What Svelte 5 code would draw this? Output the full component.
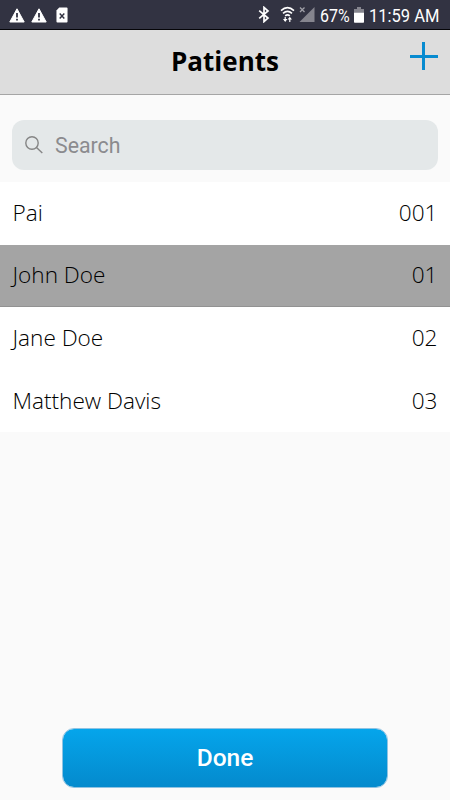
<script>
  let patients = $state([
    { name: "Pai", id: "001" },
    { name: "John Doe", id: "01" },
    { name: "Jane Doe", id: "02" },
    { name: "Matthew Davis", id: "03" },
  ]);
  let selected = $state("01");
  let query = $state("");

  const shown = $derived(
    patients.filter((p) => p.name.toLowerCase().includes(query.toLowerCase()))
  );
</script>

<div class="screen">
  <div class="status">
    <div class="notices">
      {#each [0, 1] as n (n)}
        <svg width="16" height="15" viewBox="0 0 16 15">
          <path d="M8 0.8 15.2 14H0.8Z" fill="#fff" stroke="#fff" stroke-width="1" stroke-linejoin="round" />
          <path d="M8 5v4.6M8 10.8v1.8" stroke="#323342" stroke-width="1.8" />
        </svg>
      {/each}
      <svg class="file" width="12" height="16" viewBox="0 0 13 16" preserveAspectRatio="none">
        <path d="M3.5 0.5h8q1 0 1 1v13q0 1-1 1h-10q-1 0-1-1v-11Z" fill="#fff" />
        <path d="m4 6.5 5 5m0-5-5 5" stroke="#323342" stroke-width="1.6" />
      </svg>
    </div>
    <div class="system">
      <svg width="12" height="17" viewBox="0 0 12 17">
        <path d="M1.2 4.7 10 12 6 15.6V1.4L10 5 1.2 12.3" fill="none" stroke="#fff" stroke-width="1.7" />
      </svg>
      <svg class="wifi" width="15" height="17" viewBox="0 0 15 17">
        <path d="M1 4.6q6.5-5.8 13 0M3 7.3q4.5-3.9 9 0M5.2 9.8q2.3-2 4.6 0" fill="none" stroke="#fff" stroke-width="1.6" />
        <path d="M5.2 11v4M9.8 16v-4" stroke="#fff" stroke-width="1.2" />
        <path d="M3 13h4.4l-2.2 3ZM7.6 13.5H12L9.8 10.8Z" fill="#fff" />
      </svg>
      <svg class="signal" width="16" height="17" viewBox="0 0 16 17">
        <path d="M15.5 1v15H0.5Z" fill="#85858e" />
        <path d="m1 1.5 4.5 4.5m0-4.5L1 6" stroke="#a0a0a8" stroke-width="1.3" />
      </svg>
      <span class="percent">67%</span>
      <svg class="battery" width="10" height="16" viewBox="0 0 10 16">
        <path d="M3 0h4v2h3v4H0V2h3Z" fill="#85858e" />
        <path d="M0 5.7h10V15q0 .7-.7.7H.7Q0 15.7 0 15Z" fill="#fff" />
      </svg>
      <span class="time">11:59 AM</span>
    </div>
  </div>

  <header>
    <h1>Patients</h1>
    <button class="add" aria-label="Add patient">
      <svg width="28" height="28" viewBox="0 0 28 28">
        <path d="M13.5 0v28M0 14.5h28" stroke="#078bd0" stroke-width="3" />
      </svg>
    </button>
  </header>

  <label class="search">
    <svg width="18" height="18" viewBox="0 0 18 18">
      <circle cx="7" cy="7" r="6.2" />
      <path d="m11.5 11.5 5.8 5.5" />
    </svg>
    <input type="text" placeholder="Search" bind:value={query} />
  </label>

  <ul>
    {#each shown as p (p.id)}
      <li>
        <button class="row" class:selected={p.id === selected} onclick={() => (selected = p.id)}>
          <span>{p.name}</span>
          <span>{p.id}</span>
        </button>
      </li>
    {/each}
  </ul>

  <button class="done">Done</button>
</div>

<style>
  :global(body) { margin: 0; }
  .screen { display: flex; flex-direction: column; height: 800px; background: #fafafa; overflow: hidden; }
  svg { display: block; flex: none; }
  button { border: 0; background: none; padding: 0; font: inherit; color: inherit; cursor: pointer; }

  .status {
    box-sizing: border-box; height: 30px; flex: none; padding: 0 10px 0 9px; border-bottom: 1px solid #050508;
    display: flex; justify-content: space-between; align-items: center;
    background: #323342; color: #fff; font: 19px/29px Roboto, sans-serif;
  }
  .notices, .system { display: flex; align-items: center; }
  .notices { gap: 6px; padding-top: 1px; }
  .file { margin-left: 3px; }
  .wifi { margin-left: 10px; }
  .signal { margin-left: 4px; }
  .percent { margin-left: 5px; width: 30px; white-space: nowrap; transform: scaleX(0.84); transform-origin: left; padding-top: 2px; }
  .battery { margin-left: 4px; }
  .time { margin-left: 5px; padding-top: 2px; width: 71px; white-space: nowrap; transform: scaleX(0.87); transform-origin: left; }

  header {
    box-sizing: border-box; height: 65px; flex: none; padding: 0 12px; border-bottom: 1px solid #a5a5a5;
    display: grid; grid-template-columns: 28px 1fr 28px; align-items: center; background: #ddd;
  }
  h1 { grid-column: 2; margin: 0 0 2px; text-align: center; font: 700 26px/36px "Open Sans", sans-serif; color: #000; }
  .add { margin-bottom: 12px; }

  .search {
    height: 50px; flex: none; margin: 25px 12px 12px; padding-left: 13px; border-radius: 12px;
    display: flex; align-items: center; gap: 12px; background: #e4e8e9;
  }
  .search svg { fill: none; stroke: #858585; stroke-width: 1.4; }
  input { flex: 1; min-width: 0; border: 0; padding: 1px 0 0; outline: 0; background: none; font: 21.3px Roboto, sans-serif; color: #333; }
  input::placeholder { color: #8b8b8e; opacity: 1; }

  ul { list-style: none; margin: 0; padding: 0; }
  li { height: 62.5px; }
  .row {
    box-sizing: border-box; width: 100%; height: 100%; padding: 0 12.5px;
    display: flex; justify-content: space-between; align-items: center;
    background: #fff; color: #000; font: 300 22.6px/30px "Open Sans", sans-serif;
  }
  .row.selected { background: #a4a4a4; border-bottom: 1px solid #929292; }

  .done {
    box-sizing: border-box; width: 326px; height: 60px; margin: auto auto 12.5px; border: 1px solid #8fc3e2; border-radius: 12px;
    background: linear-gradient(#05a5eb, #048acd) padding-box; color: #fff; font: 500 24.5px Roboto, sans-serif;
  }
</style>
